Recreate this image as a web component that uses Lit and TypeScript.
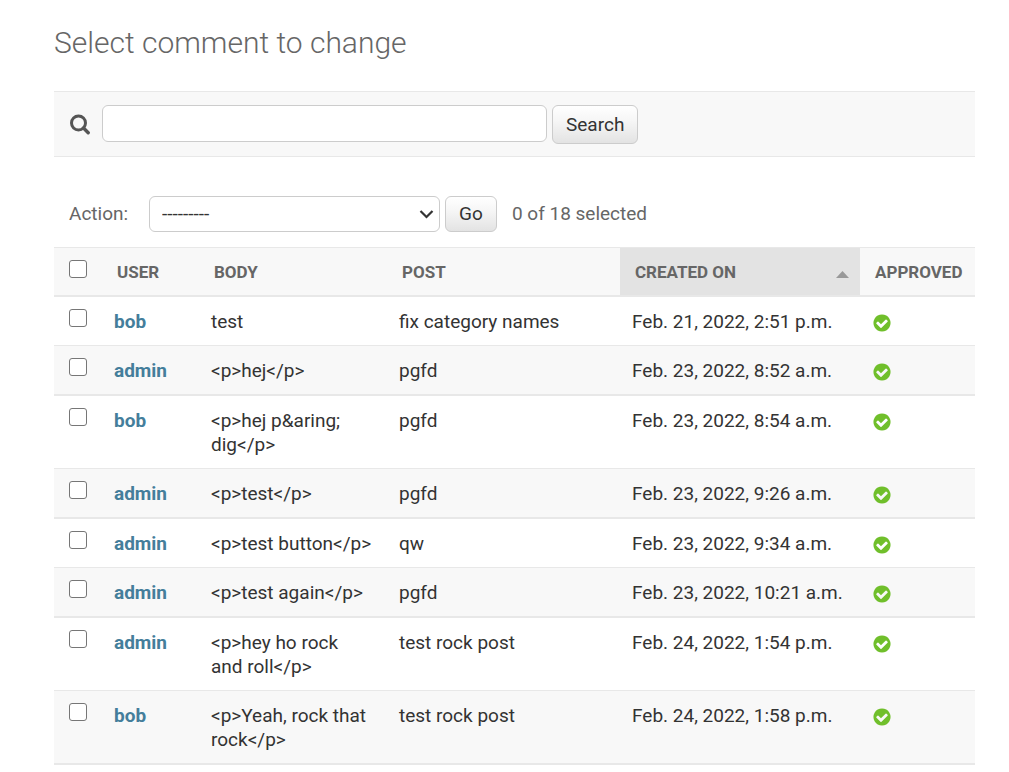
import { LitElement, html, css, svg } from "lit";
import { customElement, state } from "lit/decorators.js";

interface CommentRow {
  user: string;
  body: string;
  post: string;
  created: string;
}

const COMMENTS: CommentRow[] = [
  { user: "bob", body: "test", post: "fix category names", created: "Feb. 21, 2022, 2:51 p.m." },
  { user: "admin", body: "<p>hej</p>", post: "pgfd", created: "Feb. 23, 2022, 8:52 a.m." },
  { user: "bob", body: "<p>hej p&aring; dig</p>", post: "pgfd", created: "Feb. 23, 2022, 8:54 a.m." },
  { user: "admin", body: "<p>test</p>", post: "pgfd", created: "Feb. 23, 2022, 9:26 a.m." },
  { user: "admin", body: "<p>test button</p>", post: "qw", created: "Feb. 23, 2022, 9:34 a.m." },
  { user: "admin", body: "<p>test again</p>", post: "pgfd", created: "Feb. 23, 2022, 10:21 a.m." },
  { user: "admin", body: "<p>hey ho rock and roll</p>", post: "test rock post", created: "Feb. 24, 2022, 1:54 p.m." },
  { user: "bob", body: "<p>Yeah, rock that rock</p>", post: "test rock post", created: "Feb. 24, 2022, 1:58 p.m." },
];

const TOTAL = 18;

const checkMark = svg`<path d="M1412 734q0-28-18-46l-91-90q-19-19-45-19t-45 19l-408 407-226-226q-19-19-45-19t-45 19l-91 90q-18 18-18 46 0 27 18 45l362 362q19 19 45 19 27 0 46-19l543-543q18-18 18-45zm252 162q0 209-103 385.500t-279.500 279.500-385.500 103-385.500-103-279.500-279.500-103-385.500 103-385.500 279.500-279.500 385.500-103 385.500 103 279.500 279.500 103 385.500z" fill="#70bf2b"/>`;

@customElement("app-root")
export class AppRoot extends LitElement {
  @state() private selected = new Set<number>();

  static styles = css`
    :host {
      display: block;
      padding: 24px 34px 7px 54px;
      background: #fff;
      color: #333;
      font-family: Roboto, "Liberation Sans", sans-serif;
      font-size: 19px;
      line-height: 24px;
    }
    * {
      box-sizing: border-box;
    }
    .title {
      margin: 0 0 30px;
      font-size: 30px;
      line-height: 37px;
      font-weight: 300;
      color: #666;
    }
    .toolbar {
      display: flex;
      align-items: flex-start;
      padding: 13px 15px 12px;
      background: #f8f8f8;
      border-top: 1px solid #e8e8e8;
      border-bottom: 1px solid #e8e8e8;
    }
    .search-label {
      display: flex;
      margin: 9px 12px 0 0;
    }
    .search-input,
    .action-select {
      margin: 0;
      border: 1px solid #ccc;
      border-radius: 6px;
      background: #fff;
      color: #333;
      font: inherit;
      outline: none;
    }
    .search-input {
      flex: 0 1 445px;
      min-width: 0;
      height: 37px;
      padding: 3px 8px;
    }
    .button {
      margin: 0 0 0 5px;
      padding: 0 13px;
      border: 1px solid #ccc;
      border-radius: 6px;
      background: linear-gradient(#fff, #f6f6f6 40%, #e3e3e3);
      color: #333;
      font: inherit;
      cursor: pointer;
    }
    .search-button {
      height: 39px;
    }
    .actions {
      display: flex;
      align-items: center;
      margin-top: 24px;
      padding: 15px;
      color: #666;
    }
    .action-label {
      margin-right: 21px;
    }
    .select-wrap {
      display: grid;
      flex: 0 1 291px;
      align-items: center;
    }
    .action-select,
    .select-arrow {
      grid-area: 1 / 1;
    }
    .action-select {
      appearance: none;
      width: 100%;
      height: 36px;
      padding: 0 32px 0 12px;
    }
    .select-arrow {
      justify-self: end;
      margin-right: 6px;
      pointer-events: none;
    }
    .go-button {
      height: 36px;
    }
    .counter {
      margin-left: 15px;
    }
    .results {
      width: 100%;
      table-layout: fixed;
      border-collapse: separate;
      border-spacing: 0;
      border-top: 1px solid #e8e8e8;
    }
    .col-check {
      width: 48px;
    }
    .col-user {
      width: 97px;
    }
    .col-body {
      width: 188px;
    }
    .col-created {
      width: 240px;
    }
    .col-approved {
      width: 115px;
    }
    .head {
      padding: 12px 0 11px 15px;
      background: #f8f8f8;
      border-bottom: 2px solid #e8e8e8;
      color: #666;
      font-size: 17px;
      font-weight: 700;
      text-align: left;
      text-transform: uppercase;
      vertical-align: top;
    }
    .head a {
      color: inherit;
      text-decoration: none;
    }
    .sorted {
      background: #e3e3e3;
    }
    .sort {
      display: flex;
      align-items: center;
      justify-content: space-between;
      padding-right: 11px;
    }
    .sort-arrow {
      margin-top: 4px;
    }
    .cell {
      padding: 13px 14px 11px 12px;
      border-bottom: 1px solid #e8e8e8;
      vertical-align: top;
      text-align: left;
      font-weight: 400;
    }
    .row:nth-child(even) .cell {
      background: #f8f8f8;
      border-bottom-width: 2px;
    }
    .cell.check,
    .head.check {
      padding: 12px 0 11px 15px;
    }
    .cell.date {
      padding-right: 0;
    }
    .user-link {
      color: #447e9b;
      font-weight: 700;
      text-decoration: none;
    }
    .box {
      display: block;
      appearance: none;
      width: 18px;
      height: 18px;
      margin: 0;
      border: 1px solid #767676;
      border-radius: 3px;
      background: #fff;
    }
    .box:checked {
      background: #447e9b;
    }
    .approved {
      display: block;
      margin-top: 3px;
    }
  `;

  private toggle(index: number) {
    const next = new Set(this.selected);
    next.has(index) ? next.delete(index) : next.add(index);
    this.selected = next;
  }

  private toggleAll(event: Event) {
    const on = (event.target as HTMLInputElement).checked;
    this.selected = new Set(on ? COMMENTS.map((_, i) => i) : []);
  }

  private renderRow(row: CommentRow, index: number) {
    return html`<tr class="row">
      <td class="cell check">
        <input
          class="box"
          type="checkbox"
          aria-label="Select comment ${index + 1}"
          .checked=${this.selected.has(index)}
          @change=${() => this.toggle(index)}
        />
      </td>
      <th class="cell" scope="row"><a class="user-link" href="#">${row.user}</a></th>
      <td class="cell">${row.body}</td>
      <td class="cell">${row.post}</td>
      <td class="cell date">${row.created}</td>
      <td class="cell">
        <svg class="approved" width="20" height="20" viewBox="0 0 1792 1792" role="img" aria-label="True">${checkMark}</svg>
      </td>
    </tr>`;
  }

  render() {
    return html`
      <h1 class="title">Select comment to change</h1>
      <form class="toolbar" role="search" @submit=${(e: Event) => e.preventDefault()}>
        <label class="search-label" for="searchbar" aria-label="Search">
          <svg width="21" height="21" viewBox="0 0 21 21" aria-hidden="true">
            <circle cx="9.500" cy="9" r="7" fill="none" stroke="#555" stroke-width="3" />
            <path d="M14.500 14l4.700 4.700" stroke="#555" stroke-width="3.400" stroke-linecap="round" />
          </svg>
        </label>
        <input class="search-input" id="searchbar" type="text" />
        <button class="button search-button" type="submit">Search</button>
      </form>
      <div class="actions">
        <label class="action-label" for="action">Action:</label>
        <div class="select-wrap">
          <select class="action-select" id="action">
            <option>---------</option>
          </select>
          <svg class="select-arrow" width="15" height="10" viewBox="0 0 15 10" aria-hidden="true">
            <path d="M1.500 2l6 6 6-6" fill="none" stroke="#333" stroke-width="2.200" />
          </svg>
        </div>
        <button class="button go-button" type="button">Go</button>
        <span class="counter">${this.selected.size} of ${TOTAL} selected</span>
      </div>
      <table class="results">
        <colgroup>
          <col class="col-check" />
          <col class="col-user" />
          <col class="col-body" />
          <col />
          <col class="col-created" />
          <col class="col-approved" />
        </colgroup>
        <thead>
          <tr>
            <th class="head check" scope="col">
              <input
                class="box"
                type="checkbox"
                aria-label="Select all comments"
                .checked=${this.selected.size === COMMENTS.length}
                @change=${this.toggleAll}
              />
            </th>
            <th class="head" scope="col"><a href="#">User</a></th>
            <th class="head" scope="col"><a href="#">Body</a></th>
            <th class="head" scope="col"><a href="#">Post</a></th>
            <th class="head sorted" scope="col" aria-sort="ascending">
              <a class="sort" href="#">
                Created on
                <svg class="sort-arrow" width="13" height="7" viewBox="0 0 13 7" aria-hidden="true">
                  <path d="M0 7L6.500 0 13 7z" fill="#999" />
                </svg>
              </a>
            </th>
            <th class="head" scope="col"><a href="#">Approved</a></th>
          </tr>
        </thead>
        <tbody>
          ${COMMENTS.map((row, i) => this.renderRow(row, i))}
        </tbody>
      </table>
    `;
  }
}
